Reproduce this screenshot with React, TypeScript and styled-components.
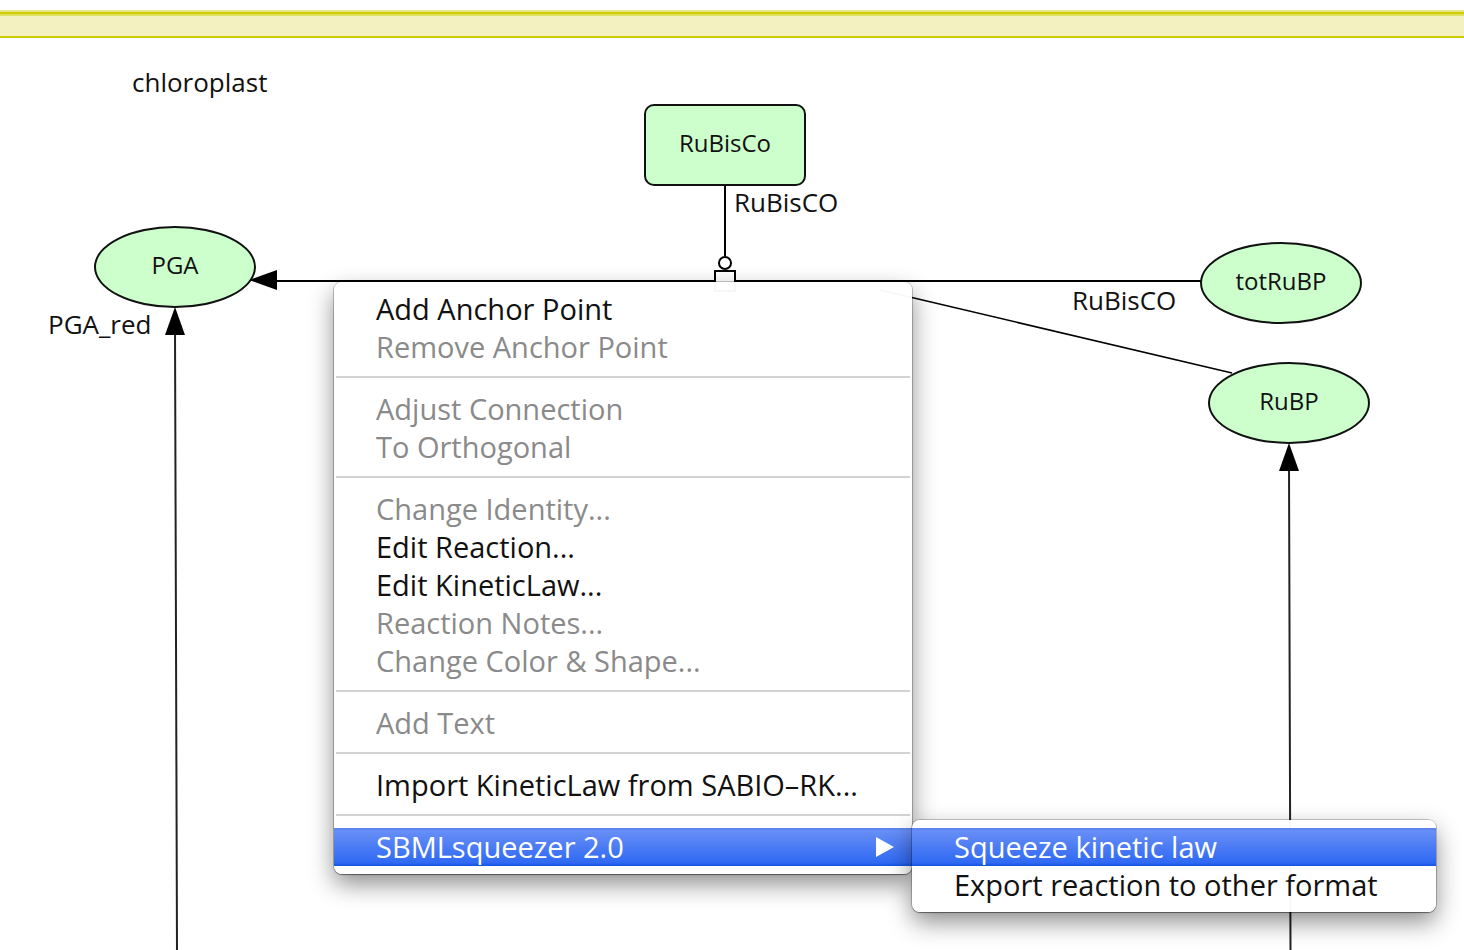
import React from 'react';
import styled, { createGlobalStyle, css } from 'styled-components';

const GlobalStyle = createGlobalStyle`
  * {
    box-sizing: border-box;
  }
  body {
    margin: 0;
    background: #ffffff;
    color: #111111;
    font-family: 'Open Sans', 'Noto Sans', sans-serif;
  }
`;

const Page = styled.main`
  display: flex;
  flex-direction: column;
  min-height: 100vh;
  padding-top: 10px;
`;

const CompartmentEdge = styled.div`
  height: 28px;
  border-top: 2px solid #e5e588;
  border-bottom: 2px solid #cccc00;
  background: linear-gradient(#cccc00 0 2px, #e0e062 2px 4px, #f3f1c0 4px);
`;

const Canvas = styled.section`
  position: relative;
  flex: 1;
  min-height: 912px;
  overflow: hidden;
`;

const Connections = styled.svg`
  position: absolute;
  inset: 0;
  width: 100%;
  height: 100%;
`;

type Place = { $x: number; $y: number };

const Species = styled.div<Place & { $shape: 'round' | 'box' }>`
  position: absolute;
  left: ${(p) => p.$x}px;
  top: ${(p) => p.$y}px;
  display: flex;
  align-items: center;
  justify-content: center;
  width: 162px;
  height: 82px;
  padding-bottom: 4px;
  border: 2px solid #111111;
  border-radius: ${(p) => (p.$shape === 'round' ? '50%' : '10px')};
  background: #ccffcc;
  font-size: 24px;
  line-height: 32px;
`;

const Label = styled.span<Place>`
  position: absolute;
  left: ${(p) => p.$x}px;
  top: ${(p) => p.$y}px;
  font-size: 26px;
  line-height: 32px;
  white-space: nowrap;
`;

const MenuPanel = styled.div<Place>`
  position: absolute;
  left: ${(p) => p.$x}px;
  top: ${(p) => p.$y}px;
  display: flex;
  flex-direction: column;
  padding: 8px 0;
  border-radius: 8px;
  background: rgba(255, 255, 255, 0.97);
  box-shadow:
    0 0 0 1px rgba(0, 0, 0, 0.2),
    0 1px 1px rgba(0, 0, 0, 0.35),
    0 10px 24px rgba(0, 0, 0, 0.45);
`;

const ContextMenu = styled(MenuPanel)`
  width: 578px;
`;

const Submenu = styled(MenuPanel)`
  width: 524px;
`;

const highlighted = css`
  background: linear-gradient(#5a80ea 0, #678ef6 3px, #2f69f3 35px, #1857e6 37px);
  color: #ffffff;
`;

const MenuItem = styled.button<{ $active?: boolean }>`
  display: flex;
  align-items: center;
  justify-content: space-between;
  height: 38px;
  padding: 0 18px 0 42px;
  border: 0;
  background: transparent;
  color: #111111;
  font-family: inherit;
  font-size: 29px;
  line-height: 38px;
  text-align: left;
  white-space: nowrap;
  &:disabled {
    color: #8a8a8a;
  }
  ${(p) => p.$active && highlighted}
`;

const Separator = styled.hr`
  height: 2px;
  margin: 10px 2px 12px;
  border: 0;
  background: #d3d3d3;
`;

const ChevronShape = styled.svg`
  width: 18px;
  height: 20px;
`;

const groups: { text: string; disabled?: boolean }[][] = [
  [{ text: 'Add Anchor Point' }, { text: 'Remove Anchor Point', disabled: true }],
  [
    { text: 'Adjust Connection', disabled: true },
    { text: 'To Orthogonal', disabled: true },
  ],
  [
    { text: 'Change Identity...', disabled: true },
    { text: 'Edit Reaction...' },
    { text: 'Edit KineticLaw...' },
    { text: 'Reaction Notes...', disabled: true },
    { text: 'Change Color & Shape...', disabled: true },
  ],
  [{ text: 'Add Text', disabled: true }],
  [{ text: 'Import KineticLaw from SABIO–RK...' }],
];

export default function App() {
  return (
    <Page>
      <GlobalStyle />
      <CompartmentEdge />
      <Canvas aria-label="Reaction diagram">
        <Connections aria-hidden="true" stroke="#000" strokeWidth="2" fill="none">
          <path d="M725 147V218M270 243H1201" />
          <path d="M880 252L1232 335" strokeWidth="1.600" />
          <path d="M175 290L177 912M1289 425L1290.500 912" stroke="#222" />
          <circle cx="725" cy="225" r="6" fill="#fff" />
          <rect x="715" y="233" width="20" height="20" fill="#fff" />
          <g fill="#000" stroke="none">
            <path d="M249 242L277 232V252Z" />
            <path d="M175 269L165 297H185Z" />
            <path d="M1289 405L1279 433H1299Z" />
          </g>
        </Connections>

        <Label $x={132} $y={28}>chloroplast</Label>
        <Label $x={734} $y={148}>RuBisCO</Label>
        <Label $x={1072} $y={246}>RuBisCO</Label>
        <Label $x={48} $y={270}>PGA_red</Label>

        <Species $x={644} $y={66} $shape="box">RuBisCo</Species>
        <Species $x={94} $y={188} $shape="round">PGA</Species>
        <Species $x={1200} $y={204} $shape="round">totRuBP</Species>
        <Species $x={1208} $y={324} $shape="round">RuBP</Species>

        <ContextMenu $x={334} $y={244} role="menu" aria-label="Reaction">
          {groups.map((group) => (
            <React.Fragment key={group[0].text}>
              {group.map((item) => (
                <MenuItem key={item.text} type="button" role="menuitem" disabled={item.disabled}>
                  {item.text}
                </MenuItem>
              ))}
              <Separator />
            </React.Fragment>
          ))}
          <MenuItem type="button" role="menuitem" aria-haspopup="menu" aria-expanded="true" $active>
            SBMLsqueezer 2.0
            <ChevronShape viewBox="0 0 18 20" aria-hidden="true">
              <path d="M0 0L18 10L0 20Z" fill="#fff" />
            </ChevronShape>
          </MenuItem>
        </ContextMenu>

        <Submenu $x={912} $y={782} role="menu" aria-label="SBMLsqueezer 2.0">
          <MenuItem type="button" role="menuitem" $active>
            Squeeze kinetic law
          </MenuItem>
          <MenuItem type="button" role="menuitem">
            Export reaction to other format
          </MenuItem>
        </Submenu>
      </Canvas>
    </Page>
  );
}
